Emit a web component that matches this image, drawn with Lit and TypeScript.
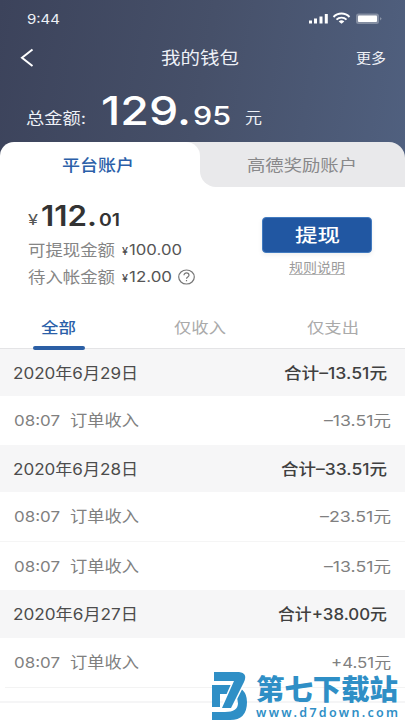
import { LitElement, html, css, svg } from "lit";
import { customElement, property } from "lit/decorators.js";

/** One line of text whose glyphs are stretched to an exact width. */
@customElement("wide-text")
class WideText extends LitElement {
  @property() text = "";
  @property({ type: Number }) w = 10;
  @property({ type: Number }) size = 15;
  @property({ type: Number }) lift = 0.37;
  @property() adjust = "spacingAndGlyphs";
  static styles = css`
    :host { display: block; flex: none; }
    svg { display: block; overflow: visible; }
    text { fill: currentColor; white-space: pre; }
  `;
  render() {
    const h = 20;
    return html`<svg width=${this.w} height=${h}>
      ${svg`<text x="0" y=${h / 2 + this.size * this.lift} font-size=${this.size} textLength=${this.w} lengthAdjust=${this.adjust}>${this.text}</text>`}
    </svg>`;
  }
}

const t = (text: string, w: number, size: number, cls = "", lift = 0.37, adjust = "spacingAndGlyphs") =>
  html`<wide-text class=${cls} .text=${text} .w=${w} .size=${size} .lift=${lift} .adjust=${adjust}></wide-text>`;

interface Group { date: string; total: string; totalWidth: number; rows: { amount: string; w: number }[]; cls: string }

const groups: Group[] = [
  { date: "2020年6月29日", total: "合计–13.51元", totalWidth: 103, rows: [{ amount: "–13.51元", w: 67 }], cls: "g1" },
  { date: "2020年6月28日", total: "合计–33.51元", totalWidth: 106, rows: [{ amount: "–23.51元", w: 71 }, { amount: "–13.51元", w: 67 }], cls: "g2" },
  { date: "2020年6月27日", total: "合计+38.00元", totalWidth: 109, rows: [{ amount: "+4.51元", w: 60 }], cls: "g3" },
];

@customElement("app-root")
class AppRoot extends LitElement {
  static styles = css`
    :host {
      display: block; position: relative; width: 405px; height: 720px; overflow: hidden;
      background: #fff; color: #4b4b4b;
      font-family: Inter, "Noto Sans CJK SC", sans-serif;
    }
    * { box-sizing: border-box; }
    .hero { height: 157px; color: #eef1f7; background: linear-gradient(100deg, #3c435b 0%, #465069 50%, #50607f 100%); }
    .status { height: 37px; padding: 0 21px 0 27px; display: flex; align-items: center; justify-content: space-between; }
    .icons { display: block; }
    .nav { height: 41px; padding: 0 19px 0 20px; display: grid; grid-template-columns: 60px 1fr 60px; align-items: center; }
    .nav .title { justify-self: center; margin-right: 6px; }
    .nav .more { justify-self: end; }
    .balance { height: 79px; padding: 0 0 0 26px; display: flex; align-items: center; }
    .big { font-weight: 500; color: #fff; margin-left: 15px; }
    .cents { font-weight: 500; color: #fff; margin-left: 2px; }
    .yuan { margin-left: 14px; }
    .panel { position: relative; margin-top: -15px; height: 163px; }
    .accounts { height: 45px; display: grid; grid-template-columns: 200px 205px; background: linear-gradient(#e9e9eb, #e9e9eb) 180px 0 / 40px 100% no-repeat; }
    .acc { height: 45px; display: flex; align-items: center; justify-content: center; }
    .acc.on { background: #fff; border-radius: 14px 14px 0 0; color: #2b5fa9; font-weight: 500; padding-right: 5px; }
    .acc.off { background: #e9e9eb; border-radius: 0 16px 0 16px; color: #88888a; padding-right: 1px; }
    .under { background: linear-gradient(#50607f 50%, #fff 50%); }
    .wallet { height: 118px; display: grid; grid-template-columns: 262px 110px; background: #fff; }
    .sums { padding: 14px 0 0 28px; }
    .amount { display: flex; height: 32px; align-items: center; color: #333; }
    .amount .n { font-weight: 600; margin-left: 3px; }
    .amount .d { font-weight: 600; margin-left: 2px; }
    .amount .y { color: #555; }
    .line { display: flex; height: 26px; align-items: center; color: #858585; margin-top: 4px; }
    .line + .line { margin-top: 1px; }
    .line .y { margin-left: 7px; color: #4b4b4b; font-weight: 500; }
    .line .v { margin-left: 1px; color: #555; }
    .line svg { margin-left: 6px; display: block; }
    .actions { padding-top: 30px; display: flex; flex-direction: column; align-items: center; }
    .btn { width: 110px; height: 36px; border: 1px solid #427bc0; border-radius: 4px; background: #2157a2; color: #fff; font-weight: 500; display: flex; align-items: center; justify-content: center; box-shadow: 0 2px 5px #0001; }
    .rule { margin-top: 6px; height: 16px; border-bottom: 1px solid #b5b5b5; color: #9b9b9b; display: flex; align-items: center; }
    .filters { height: 44px; display: grid; grid-template-columns: 116px 167px 99px; color: #aaa; border-bottom: 1px solid #e4e4e6; }
    .filters div { position: relative; display: flex; align-items: center; justify-content: center; }
    .filters .on { color: #2b5fa9; font-weight: 500; }
    .filters .on::after { content: ""; position: absolute; left: 33px; top: 41px; width: 52px; height: 4px; border-radius: 2px; background: #2b5fa5; }
    .head { height: 47px; background: #f6f6f7; display: flex; align-items: center; justify-content: space-between; padding: 0 18px 0 13px; color: #4c4c4c; }
    .g3 .head { height: 48px; }
    .sum { font-weight: 500; color: #404040; }
    .row { height: 49px; display: flex; align-items: center; padding: 0 14px 1px 14px; color: #808080; }
    .row + .row { border-top: 1px solid #f5f5f5; }
    .row .what { margin-left: 10px; }
    .row .amt { margin-left: auto; }
    .end { margin-left: 5px; height: 14px; border-top: 1px solid #f3f3f3; }
    .next { height: 20px; border-top: 2px solid #f5f5f6; }
    .mark { position: absolute; left: 212px; top: 671px; display: flex; gap: 8px; color: #2f8fc6; }
    .mark .name { font-weight: 900; margin-top: 8px; }
    .mark .site { font-weight: 600; margin-top: 4px; font-family: "Noto Sans", sans-serif; }
    .mark svg { display: block; }
  `;

  render() {
    return html`
      <div class="hero">
        <div class="status">
          ${t("9:44", 33, 13.5)}
          <svg class="icons" width="75" height="14" viewBox="0 0 75 14" fill="#fff">
            <path d="M0 8.500h3v3H0zM5 6.500h3v5H5zM10.500 4.500h3v7h-3zM15.800 2h3v9.500h-3z" />
            <path d="M24.500 5a11 11 0 0 1 16 0M27.500 7.700a7 7 0 0 1 10 0" fill="none" stroke="#fff" stroke-width="1.900" />
            <path d="M29.700 9.500a4 4 0 0 1 5.600 0l-2.800 2.300z" />
            <rect x="47" y="1.500" width="23" height="10.500" rx="2.500" fill="#fff" opacity=".3" />
            <rect x="49" y="3.500" width="19" height="6.500" rx="1" />
            <path d="M71 5v3.500l1.800-1.700z" opacity=".35" />
          </svg>
        </div>
        <div class="nav">
          <svg width="14" height="20" viewBox="0 0 14 20"><path d="M12.500 1.500 2 9.800l10.500 8.200" fill="none" stroke="#fff" stroke-width="2" /></svg>
          ${t("我的钱包", 78, 16.5, "title")}
          ${t("更多", 30, 13.5, "more")}
        </div>
        <div class="balance">
          ${t("总金额:", 60, 15.5)}
          ${t("129.", 90, 40, "big", 0.18)}
          ${t("95", 38, 26, "cents", 0.28)}
          ${t("元", 17, 14.5, "yuan", 0.34)}
        </div>
      </div>
      <div class="panel">
        <div class="accounts">
          <div class="acc on">${t("平台账户", 72, 16)}</div>
          <div class="under"><div class="acc off">${t("高德奖励账户", 110, 16)}</div></div>
        </div>
        <div class="wallet">
          <div class="sums">
            <div class="amount">${t("¥", 10, 14, "y", 0.55)}${t("112.", 56, 28, "n", 0.325)}${t("01", 21, 17.5, "d", 0.52)}</div>
            <div class="line">${t("可提现金额", 87, 15.5)}${t("¥", 6, 10, "y", 0.52)}${t("100.00", 53, 14, "v")}</div>
            <div class="line">${t("待入帐金额", 87, 15.5)}${t("¥", 6, 10, "y", 0.52)}${t("12.00", 43, 14, "v")}
              <svg width="17" height="16" viewBox="0 0 17 16" fill="none" stroke="#777" stroke-width="1.200">
                <ellipse cx="8.500" cy="8" rx="7.800" ry="7" />
                <path d="M6 6.300c0-3.200 5-3.100 5 0 0 1.700-2.500 1.600-2.500 3.500M8.500 10.900v1.400" />
              </svg>
            </div>
          </div>
          <div class="actions">
            <div class="btn">${t("提现", 45, 18.5)}</div>
            <div class="rule">${t("规则说明", 56, 13)}</div>
          </div>
        </div>
      </div>
      <div class="filters">
        <div class="on">${t("全部", 35, 15)}</div>
        <div>${t("仅收入", 52, 15)}</div>
        <div>${t("仅支出", 52, 15)}</div>
      </div>
      ${groups.map((g) => html`
        <section class=${g.cls}>
          <div class="head">${t(g.date, 125, 15.5)}${t(g.total, g.totalWidth, 15.5, "sum")}</div>
          ${g.rows.map((r) => html`<div class="row">${t("08:07", 46, 15)}${t("订单收入", 69, 15.5, "what")}${t(r.amount, r.w, 15, "amt")}</div>`)}
        </section>`)}
      <div class="end"></div>
      <div class="next"></div>
      <div class="mark">
        <svg width="36" height="49" viewBox="0 0 36 49">
          <path d="M0 14h18q17 2 17 17 0 18-17 18H0v-8h13q13 0 13-9 0-9-11-9H8v13H0z" fill="#2f8fc6" />
          <path d="M2 1h25q9 1 5 10L19 37h-9L22 10H2z" fill="#2f8fc6" stroke="#fff" stroke-width="3" paint-order="stroke" />
        </svg>
        <div>${t("第七下载站", 142, 28, "name", 0.38)}${t("www.d7down.com", 142, 12.5, "site", 0.3, "spacing")}</div>
      </div>
    `;
  }
}
